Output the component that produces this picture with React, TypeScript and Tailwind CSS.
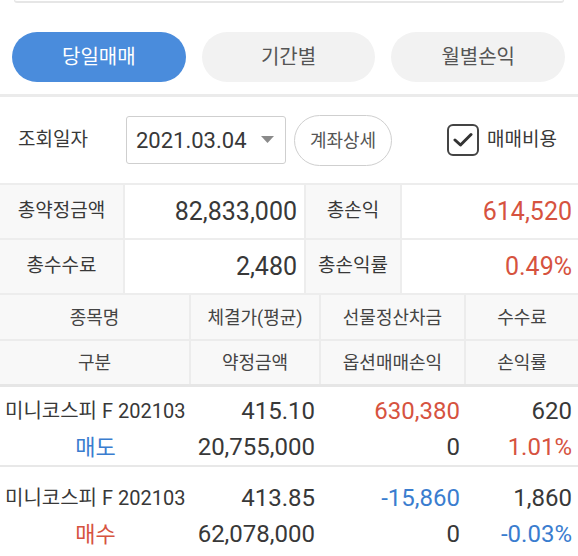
import React from "react";

const RED = "text-[#d6533f]";
const BLUE = "text-[#3a7dcf]";

export default function App() {
  return (
    <div
      className="w-[578px] h-[556px] overflow-hidden bg-white text-[#383838]"
      style={{ fontFamily: 'Roboto, "Noto Sans CJK KR", sans-serif' }}
    >
      {/* remnant of box above */}
      <div className="mx-[14px] h-[3px] rounded-b-[6px] border-x border-b-2 border-[#e6e6e6]" />

      {/* tabs */}
      <div className="mt-[29px] flex gap-[16px] px-[12px] pr-[13px]">
        <div className="flex h-[50px] flex-1 items-center justify-center rounded-full bg-[#4a8cdc] text-[20px] text-white">
          당일매매
        </div>
        <div className="flex h-[50px] flex-1 items-center justify-center rounded-full bg-[#f2f2f2] text-[20px] text-[#555]">
          기간별
        </div>
        <div className="flex h-[50px] flex-1 items-center justify-center rounded-full bg-[#f2f2f2] text-[20px] text-[#555]">
          월별손익
        </div>
      </div>

      <div className="mt-[12px] h-[3px] bg-[#ebebeb]" />

      {/* filter row */}
      <div className="flex h-[86px] items-center">
        <div className="ml-[18px] w-[108px] text-[19px]">조회일자</div>
        <div className="flex h-[48px] w-[160px] items-center justify-between rounded-[3px] border border-[#cfcfcf] pl-[9px] pr-[11px]">
          <span className="text-[22px]">2021.03.04</span>
          <svg width="13" height="8" viewBox="0 0 13 8">
            <path d="M0 0 L13 0 L6.5 7 Z" fill="#8a8a8a" />
          </svg>
        </div>
        <div className="ml-[8px] flex h-[51px] w-[98px] items-center justify-center rounded-full border border-[#cfcfcf] text-[18px] text-[#555]">
          계좌상세
        </div>
        <div className="ml-[55px] flex items-center gap-[8px]">
          <div className="flex h-[32px] w-[32px] items-center justify-center rounded-[6px] border-[2.5px] border-[#444]">
            <svg width="20" height="16" viewBox="0 0 20 16">
              <path d="M2 8 L7.5 13 L18 2.5" fill="none" stroke="#333" strokeWidth="3" strokeLinecap="round" strokeLinejoin="round" />
            </svg>
          </div>
          <span className="text-[19px]">매매비용</span>
        </div>
      </div>

      {/* summary table */}
      <div className="border-t-2 border-[#ededed]">
        <div className="grid h-[55px] grid-cols-[125px_179px_98px_176px] border-b-2 border-[#ededed]">
          <div className="flex items-center justify-center border-r-2 border-[#ededed] bg-[#f8f8f8] text-[19px]">총약정금액</div>
          <div className="flex items-center justify-end pr-[7px] text-[25px]">82,833,000</div>
          <div className="flex items-center justify-center border-x-2 border-[#ededed] bg-[#f8f8f8] text-[19px]">총손익</div>
          <div className={`flex items-center justify-end pr-[6px] text-[25px] ${RED}`}>614,520</div>
        </div>
        <div className="grid h-[55px] grid-cols-[125px_179px_98px_176px] border-b-2 border-[#ededed]">
          <div className="flex items-center justify-center border-r-2 border-[#ededed] bg-[#f8f8f8] text-[19px]">총수수료</div>
          <div className="flex items-center justify-end pr-[7px] text-[25px]">2,480</div>
          <div className="flex items-center justify-center border-x-2 border-[#ededed] bg-[#f8f8f8] text-[19px]">총손익률</div>
          <div className={`flex items-center justify-end pr-[6px] text-[25px] ${RED}`}>0.49%</div>
        </div>
      </div>

      {/* header */}
      <div className="bg-[#f8f8f8] text-[18px] text-[#444]">
        <div className="grid h-[46px] grid-cols-[191px_130px_145px_112px] border-b-2 border-[#ececec]">
          <div className="flex items-center justify-center border-r-2 border-[#ececec]">종목명</div>
          <div className="flex items-center justify-center border-r-2 border-[#ececec]">체결가(평균)</div>
          <div className="flex items-center justify-center border-r-2 border-[#ececec]">선물정산차금</div>
          <div className="flex items-center justify-center">수수료</div>
        </div>
        <div className="grid h-[46px] grid-cols-[191px_130px_145px_112px] border-b-[3px] border-[#e6e6e6]">
          <div className="flex items-center justify-center border-r-2 border-[#ececec]">구분</div>
          <div className="flex items-center justify-center border-r-2 border-[#ececec]">약정금액</div>
          <div className="flex items-center justify-center border-r-2 border-[#ececec]">옵션매매손익</div>
          <div className="flex items-center justify-center">손익률</div>
        </div>
      </div>

      {/* rows */}
      <div className="flex h-[80px] flex-col justify-center border-b-2 border-[#e8e8e8] pt-[6px]">
        <div className="grid h-[36px] grid-cols-[191px_130px_145px_112px] items-center">
          <div className="whitespace-nowrap pl-[5px] text-[20px]">미니코스피 F 202103</div>
          <div className="pr-[6px] text-right text-[24px]">415.10</div>
          <div className={`pr-[6px] text-right text-[24px] ${RED}`}>630,380</div>
          <div className="pr-[6px] text-right text-[24px]">620</div>
        </div>
        <div className="grid h-[36px] grid-cols-[191px_130px_145px_112px] items-center">
          <div className={`text-center text-[22px] ${BLUE}`}>매도</div>
          <div className="pr-[6px] text-right text-[24px]">20,755,000</div>
          <div className="pr-[6px] text-right text-[24px]">0</div>
          <div className={`pr-[6px] text-right text-[24px] ${RED}`}>1.01%</div>
        </div>
      </div>
      <div className="flex h-[84px] flex-col justify-center pt-[14px]">
        <div className="grid h-[36px] grid-cols-[191px_130px_145px_112px] items-center">
          <div className="whitespace-nowrap pl-[5px] text-[20px]">미니코스피 F 202103</div>
          <div className="pr-[6px] text-right text-[24px]">413.85</div>
          <div className={`pr-[6px] text-right text-[24px] ${BLUE}`}>-15,860</div>
          <div className="pr-[6px] text-right text-[24px]">1,860</div>
        </div>
        <div className="grid h-[36px] grid-cols-[191px_130px_145px_112px] items-center">
          <div className={`text-center text-[22px] ${RED}`}>매수</div>
          <div className="pr-[6px] text-right text-[24px]">62,078,000</div>
          <div className="pr-[6px] text-right text-[24px]">0</div>
          <div className={`pr-[6px] text-right text-[24px] ${BLUE}`}>-0.03%</div>
        </div>
      </div>
    </div>
  );
}
